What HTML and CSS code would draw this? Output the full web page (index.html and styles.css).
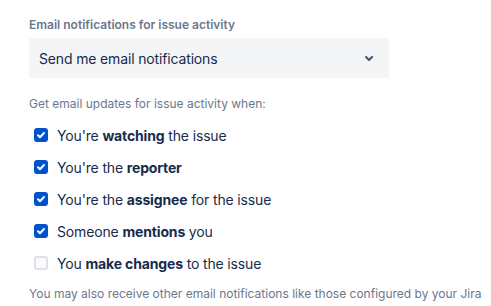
FILE: index.html
```html
<html>
	<head>
		<title>Notification settings</title>
		<link rel="stylesheet" href="styles.css">
	</head>
	<body>
		<div class="Panel">
			<div class="FieldLabel">Email notifications for issue activity</div>
			<div class="Select">
				<span>Send me email notifications</span>
				<svg class="Chevron" width="24" height="24" viewBox="0 0 24 24"><path d="M8.3 10.3a1 1 0 0 1 1.4 0L12 12.6l2.3-2.3a1 1 0 1 1 1.4 1.4l-3 3a1 1 0 0 1-1.4 0l-3-3a1 1 0 0 1 0-1.4z" fill="#42526e"/></svg>
			</div>
			<div class="Hint">Get email updates for issue activity when:</div>
			<div class="Options">
				<label class="Option"><span class="Box Checked"><svg width="14" height="14" viewBox="0 0 14 14"><path d="M4 7.2l2 2 4-4.2" stroke="#fff" stroke-width="2" fill="none" stroke-linecap="round" stroke-linejoin="round"/></svg></span><span>You're <b>watching</b> the issue</span></label>
				<label class="Option"><span class="Box Checked"><svg width="14" height="14" viewBox="0 0 14 14"><path d="M4 7.2l2 2 4-4.2" stroke="#fff" stroke-width="2" fill="none" stroke-linecap="round" stroke-linejoin="round"/></svg></span><span>You're the <b>reporter</b></span></label>
				<label class="Option"><span class="Box Checked"><svg width="14" height="14" viewBox="0 0 14 14"><path d="M4 7.2l2 2 4-4.2" stroke="#fff" stroke-width="2" fill="none" stroke-linecap="round" stroke-linejoin="round"/></svg></span><span>You're the <b>assignee</b> for the issue</span></label>
				<label class="Option"><span class="Box Checked"><svg width="14" height="14" viewBox="0 0 14 14"><path d="M4 7.2l2 2 4-4.2" stroke="#fff" stroke-width="2" fill="none" stroke-linecap="round" stroke-linejoin="round"/></svg></span><span>Someone <b>mentions</b> you</span></label>
				<label class="Option"><span class="Box"></span><span>You <b>make changes</b> to the issue</span></label>
			</div>
			<div class="Footnote">You may also receive other email notifications like those configured by your Jira</div>
		</div>
	</body>
</html>
```
FILE: styles.css
```css
/* Page */

body {
	margin: 0;
	background-color: #ffffff;
	font-family: Inter, "Liberation Sans", sans-serif;
	color: #172b4d;
	overflow: hidden;
}

.Panel {
	padding: 17px 0 0 29px;
	width: 460px;
	white-space: nowrap;
}

/* Select field */

.FieldLabel {
	font-size: 12px;
	font-weight: 600;
	color: #6b778c;
	line-height: 16px;
	margin-bottom: 5px;
}

.Select {
	width: 360px;
	height: 40px;
	box-sizing: border-box;
	background-color: #f4f5f7;
	border-radius: 3px;
	display: flex;
	align-items: center;
	justify-content: space-between;
	padding: 0 8px 0 10px;
	font-size: 14px;
	letter-spacing: -0.15px;
}

/* Checkbox list */

.Hint {
	font-size: 12px;
	color: #6b778c;
	line-height: 16px;
	margin-top: 18px;
}

.Options {
	display: flex;
	flex-direction: column;
	gap: 8px;
	margin-top: 11px;
}

.Option {
	display: flex;
	align-items: center;
	height: 24px;
	font-size: 14px;
	letter-spacing: -0.15px;
}

.Option b {
	font-weight: 700;
}

.Box {
	width: 14px;
	height: 14px;
	box-sizing: border-box;
	border-radius: 3px;
	margin: 0 9px 0 5px;
	background-color: #fafbfc;
	border: 2px solid #dfe1e6;
	display: flex;
	align-items: center;
	justify-content: center;
}

.Box svg {
	flex: none;
}

.Box.Checked {
	background-color: #0052cc;
	border-color: #0052cc;
}

.Footnote {
	font-size: 12px;
	color: #6b778c;
	line-height: 16px;
	margin-top: 11px;
}
```
